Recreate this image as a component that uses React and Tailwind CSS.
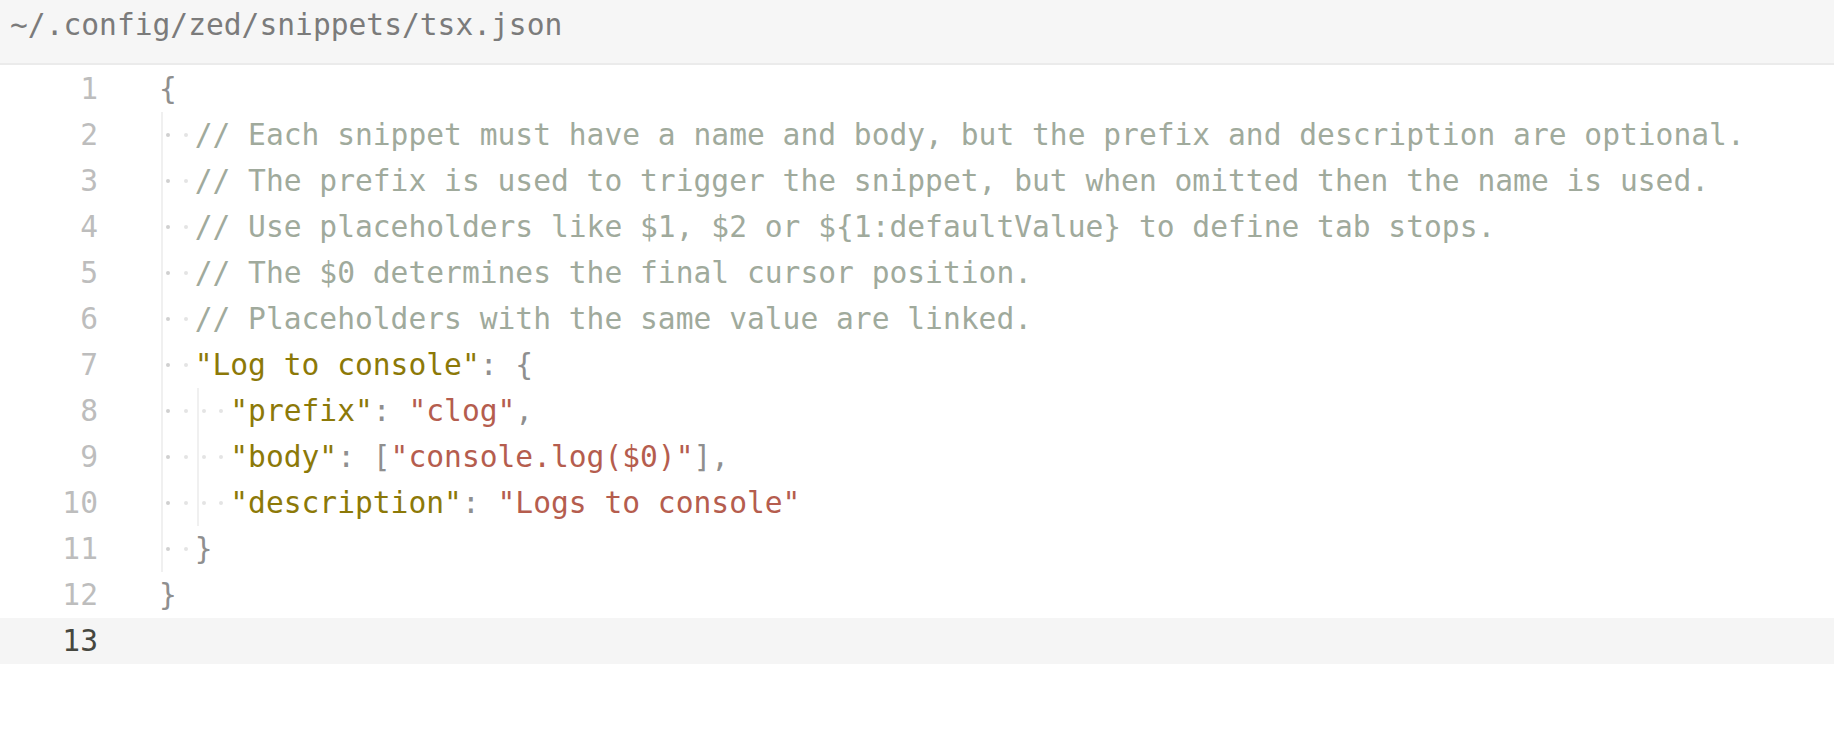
import React from "react";

const TOK = {
  p: "text-[#8f8f8f]",
  c: "text-[#a0aa9c]",
  k: "text-[#8c7908]",
  s: "text-[#b55d4e]",
};

const lines = [
  { indent: 0, t: [["{", "p"]] },
  { indent: 2, t: [["// Each snippet must have a name and body, but the prefix and description are optional.", "c"]] },
  { indent: 2, t: [["// The prefix is used to trigger the snippet, but when omitted then the name is used.", "c"]] },
  { indent: 2, t: [["// Use placeholders like $1, $2 or ${1:defaultValue} to define tab stops.", "c"]] },
  { indent: 2, t: [["// The $0 determines the final cursor position.", "c"]] },
  { indent: 2, t: [["// Placeholders with the same value are linked.", "c"]] },
  { indent: 2, t: [["\"Log to console\"", "k"], [": {", "p"]] },
  { indent: 4, t: [["\"prefix\"", "k"], [": ", "p"], ["\"clog\"", "s"], [",", "p"]] },
  { indent: 4, t: [["\"body\"", "k"], [": [", "p"], ["\"console.log($0)\"", "s"], ["],", "p"]] },
  { indent: 4, t: [["\"description\"", "k"], [": ", "p"], ["\"Logs to console\"", "s"]] },
  { indent: 2, t: [["}", "p"]] },
  { indent: 0, t: [["}", "p"]] },
  { indent: 0, t: [], active: true },
];

function Space({ first }) {
  return (
    <span className="flex w-[1ch] h-full items-center justify-center">
      <span
        className={
          "block w-[4px] h-[4px] rounded-full " +
          (first ? "bg-[#d0d0d0]" : "bg-[#e4e4e4]")
        }
      />
    </span>
  );
}

function IndentLevel({ first }) {
  return (
    <span className="relative flex h-full">
      <span className="absolute left-[2px] top-0 bottom-0 w-[2px] bg-[#f0f0f0]" />
      <Space first={first} />
      <Space first={false} />
    </span>
  );
}

export default function App() {
  return (
    <div className="w-full h-[750px] bg-white font-['DejaVu_Sans_Mono',monospace] text-[29.6px] overflow-hidden">
      <div className="h-[65px] bg-[#f6f6f6] border-b-2 border-[#ebebeb] pl-[10px] pt-[3px]">
        <span className="leading-[40px] text-[#7b7b7b] whitespace-pre">~/.config/zed/snippets/tsx.json</span>
      </div>
      <div className="pt-[1px]">
        {lines.map((ln, i) => (
          <div
            key={i}
            className={"flex h-[46px] leading-[46px] " + (ln.active ? "bg-[#f5f5f5]" : "")}
          >
            <span
              className={
                "w-[98px] shrink-0 text-right " +
                (ln.active ? "text-[#46473f]" : "text-[#bdbdbd]")
              }
            >
              {i + 1}
            </span>
            <span className="flex h-full pl-[61px]">
              {Array.from({ length: ln.indent / 2 }).map((_, j) => (
                <IndentLevel key={j} first={j === 0} />
              ))}
              {ln.t.map(([text, kind], j) => (
                <span key={j} className={"whitespace-pre " + TOK[kind]}>
                  {text}
                </span>
              ))}
            </span>
          </div>
        ))}
      </div>
    </div>
  );
}
